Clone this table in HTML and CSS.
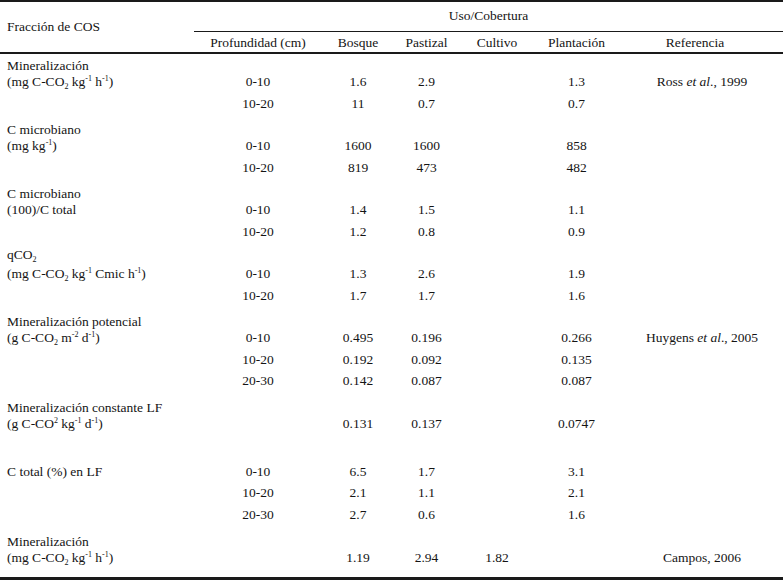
FILE: index.html
```html
<!DOCTYPE html>
<html lang="es">
<head>
<meta charset="utf-8">
<title>Fracción de COS</title>
<link rel="stylesheet" href="styles.css">
</head>
<body>
<table class="tbl">
  <colgroup>
    <col class="c-label"><col class="c-prof"><col class="c-bos"><col class="c-pas"><col class="c-cul"><col class="c-pla"><col class="c-ref">
  </colgroup>
  <thead>
    <tr class="h1">
      <th class="lab hfr" rowspan="2">Fracción de COS</th>
      <th class="uso" colspan="6">Uso/Cobertura</th>
    </tr>
    <tr class="h2">
      <th>Profundidad (cm)</th>
      <th>Bosque</th>
      <th>Pastizal</th>
      <th>Cultivo</th>
      <th>Plantación</th>
      <th class="refh">Referencia</th>
    </tr>
  </thead>
  <tbody class="g g1">
    <tr class="l1"><td class="lab">Mineralización</td><td></td><td></td><td></td><td></td><td></td><td></td></tr>
    <tr class="d"><td class="lab">(mg C-CO<sub>2</sub> kg<sup>-1</sup> h<sup>-1</sup>)</td><td>0-10</td><td>1.6</td><td>2.9</td><td></td><td>1.3</td><td class="ref">Ross <i>et al</i>., 1999</td></tr>
    <tr class="d"><td class="lab"></td><td>10-20</td><td>11</td><td>0.7</td><td></td><td>0.7</td><td class="ref"></td></tr>
  </tbody>
  <tbody class="g">
    <tr class="l1"><td class="lab">C microbiano</td><td></td><td></td><td></td><td></td><td></td><td></td></tr>
    <tr class="d"><td class="lab">(mg kg<sup>-1</sup>)</td><td>0-10</td><td>1600</td><td>1600</td><td></td><td>858</td><td class="ref"></td></tr>
    <tr class="d"><td class="lab"></td><td>10-20</td><td>819</td><td>473</td><td></td><td>482</td><td class="ref"></td></tr>
  </tbody>
  <tbody class="g">
    <tr class="l1"><td class="lab">C microbiano</td><td></td><td></td><td></td><td></td><td></td><td></td></tr>
    <tr class="d"><td class="lab">(100)/C total</td><td>0-10</td><td>1.4</td><td>1.5</td><td></td><td>1.1</td><td class="ref"></td></tr>
    <tr class="d"><td class="lab"></td><td>10-20</td><td>1.2</td><td>0.8</td><td></td><td>0.9</td><td class="ref"></td></tr>
  </tbody>
  <tbody class="g g4">
    <tr class="l1"><td class="lab">qCO<sub>2</sub></td><td></td><td></td><td></td><td></td><td></td><td></td></tr>
    <tr class="d"><td class="lab">(mg C-CO<sub>2</sub> kg<sup>-1</sup> Cmic h<sup>-1</sup>)</td><td>0-10</td><td>1.3</td><td>2.6</td><td></td><td>1.9</td><td class="ref"></td></tr>
    <tr class="d"><td class="lab"></td><td>10-20</td><td>1.7</td><td>1.7</td><td></td><td>1.6</td><td class="ref"></td></tr>
  </tbody>
  <tbody class="g">
    <tr class="l1"><td class="lab">Mineralización potencial</td><td></td><td></td><td></td><td></td><td></td><td></td></tr>
    <tr class="d"><td class="lab">(g C-CO<sub>2</sub> m<sup>-2</sup> d<sup>-1</sup>)</td><td>0-10</td><td>0.495</td><td>0.196</td><td></td><td>0.266</td><td class="ref">Huygens <i>et al</i>., 2005</td></tr>
    <tr class="d"><td class="lab"></td><td>10-20</td><td>0.192</td><td>0.092</td><td></td><td>0.135</td><td class="ref"></td></tr>
    <tr class="d"><td class="lab"></td><td>20-30</td><td>0.142</td><td>0.087</td><td></td><td>0.087</td><td class="ref"></td></tr>
  </tbody>
  <tbody class="g">
    <tr class="l1"><td class="lab">Mineralización constante LF</td><td></td><td></td><td></td><td></td><td></td><td></td></tr>
    <tr class="d"><td class="lab">(g C-CO<sup>2</sup> kg<sup>-1</sup> d<sup>-1</sup>)</td><td></td><td>0.131</td><td>0.137</td><td></td><td>0.0747</td><td class="ref"></td></tr>
    <tr class="d"><td class="lab">&nbsp;</td><td></td><td></td><td></td><td></td><td></td><td class="ref"></td></tr>
  </tbody>
  <tbody class="g">
    <tr class="d"><td class="lab">C total (%) en LF</td><td>0-10</td><td>6.5</td><td>1.7</td><td></td><td>3.1</td><td class="ref"></td></tr>
    <tr class="d"><td class="lab"></td><td>10-20</td><td>2.1</td><td>1.1</td><td></td><td>2.1</td><td class="ref"></td></tr>
    <tr class="d"><td class="lab"></td><td>20-30</td><td>2.7</td><td>0.6</td><td></td><td>1.6</td><td class="ref"></td></tr>
  </tbody>
  <tbody class="g glast">
    <tr class="l1"><td class="lab">Mineralización</td><td></td><td></td><td></td><td></td><td></td><td></td></tr>
    <tr class="d"><td class="lab">(mg C-CO<sub>2</sub> kg<sup>-1</sup> h<sup>-1</sup>)</td><td></td><td>1.19</td><td>2.94</td><td>1.82</td><td></td><td class="ref">Campos, 2006</td></tr>
  </tbody>
</table>
</body>
</html>
```
FILE: styles.css
```css
html, body {
  margin: 0;
  padding: 0;
  background: #ffffff;
}

body {
  width: 783px;
  height: 580px;
  overflow: hidden;
  font-family: "Liberation Serif", "Times New Roman", serif;
  font-size: 13.5px;
  color: #141414;
}

.tbl {
  width: 783px;
  table-layout: fixed;
  border-collapse: separate;
  border-spacing: 0;
  border-top: 2px solid #1a1a1a;
  border-bottom: 3px solid #1a1a1a;
}

.c-label { width: 194px; }
.c-prof { width: 128px; }
.c-bos { width: 72px; }
.c-pas { width: 65px; }
.c-cul { width: 76px; }
.c-pla { width: 83px; }
.c-ref { width: 165px; }

th, td {
  padding: 0;
  line-height: 16px;
  text-align: center;
  white-space: nowrap;
  font-weight: normal;
  vertical-align: top;
}

.lab {
  text-align: left;
  padding-left: 7px;
}

/* header */
.h1 th {
  padding-top: 6px;
  padding-bottom: 7px;
}

.uso {
  border-bottom: 1px solid #1a1a1a;
}

.hfr {
  vertical-align: middle;
  border-bottom: 2px solid #1a1a1a;
}

.h1 th.hfr {
  padding-top: 0;
  padding-bottom: 0;
}

.h2 th {
  padding-top: 3px;
  padding-bottom: 1px;
  border-bottom: 2px solid #1a1a1a;
}

.h2 th.refh {
  padding-right: 11px;
}

.ref {
  padding-left: 3px;
}

/* body groups */
.d td {
  padding-bottom: 5.5px;
}

.g tr:first-child td {
  padding-top: 5px;
}

.g1 tr:first-child td {
  padding-top: 4px;
}

.g4 tr:first-child td {
  padding-top: 2px;
  padding-bottom: 3px;
}

.glast tr:first-child td {
  padding-top: 6px;
}

.glast tr:last-child td {
  padding-bottom: 11px;
}

sup, sub {
  font-size: 8px;
  line-height: 0;
}

sup {
  vertical-align: 5px;
}

sub {
  vertical-align: -3px;
}

i {
  font-style: italic;
}
```
